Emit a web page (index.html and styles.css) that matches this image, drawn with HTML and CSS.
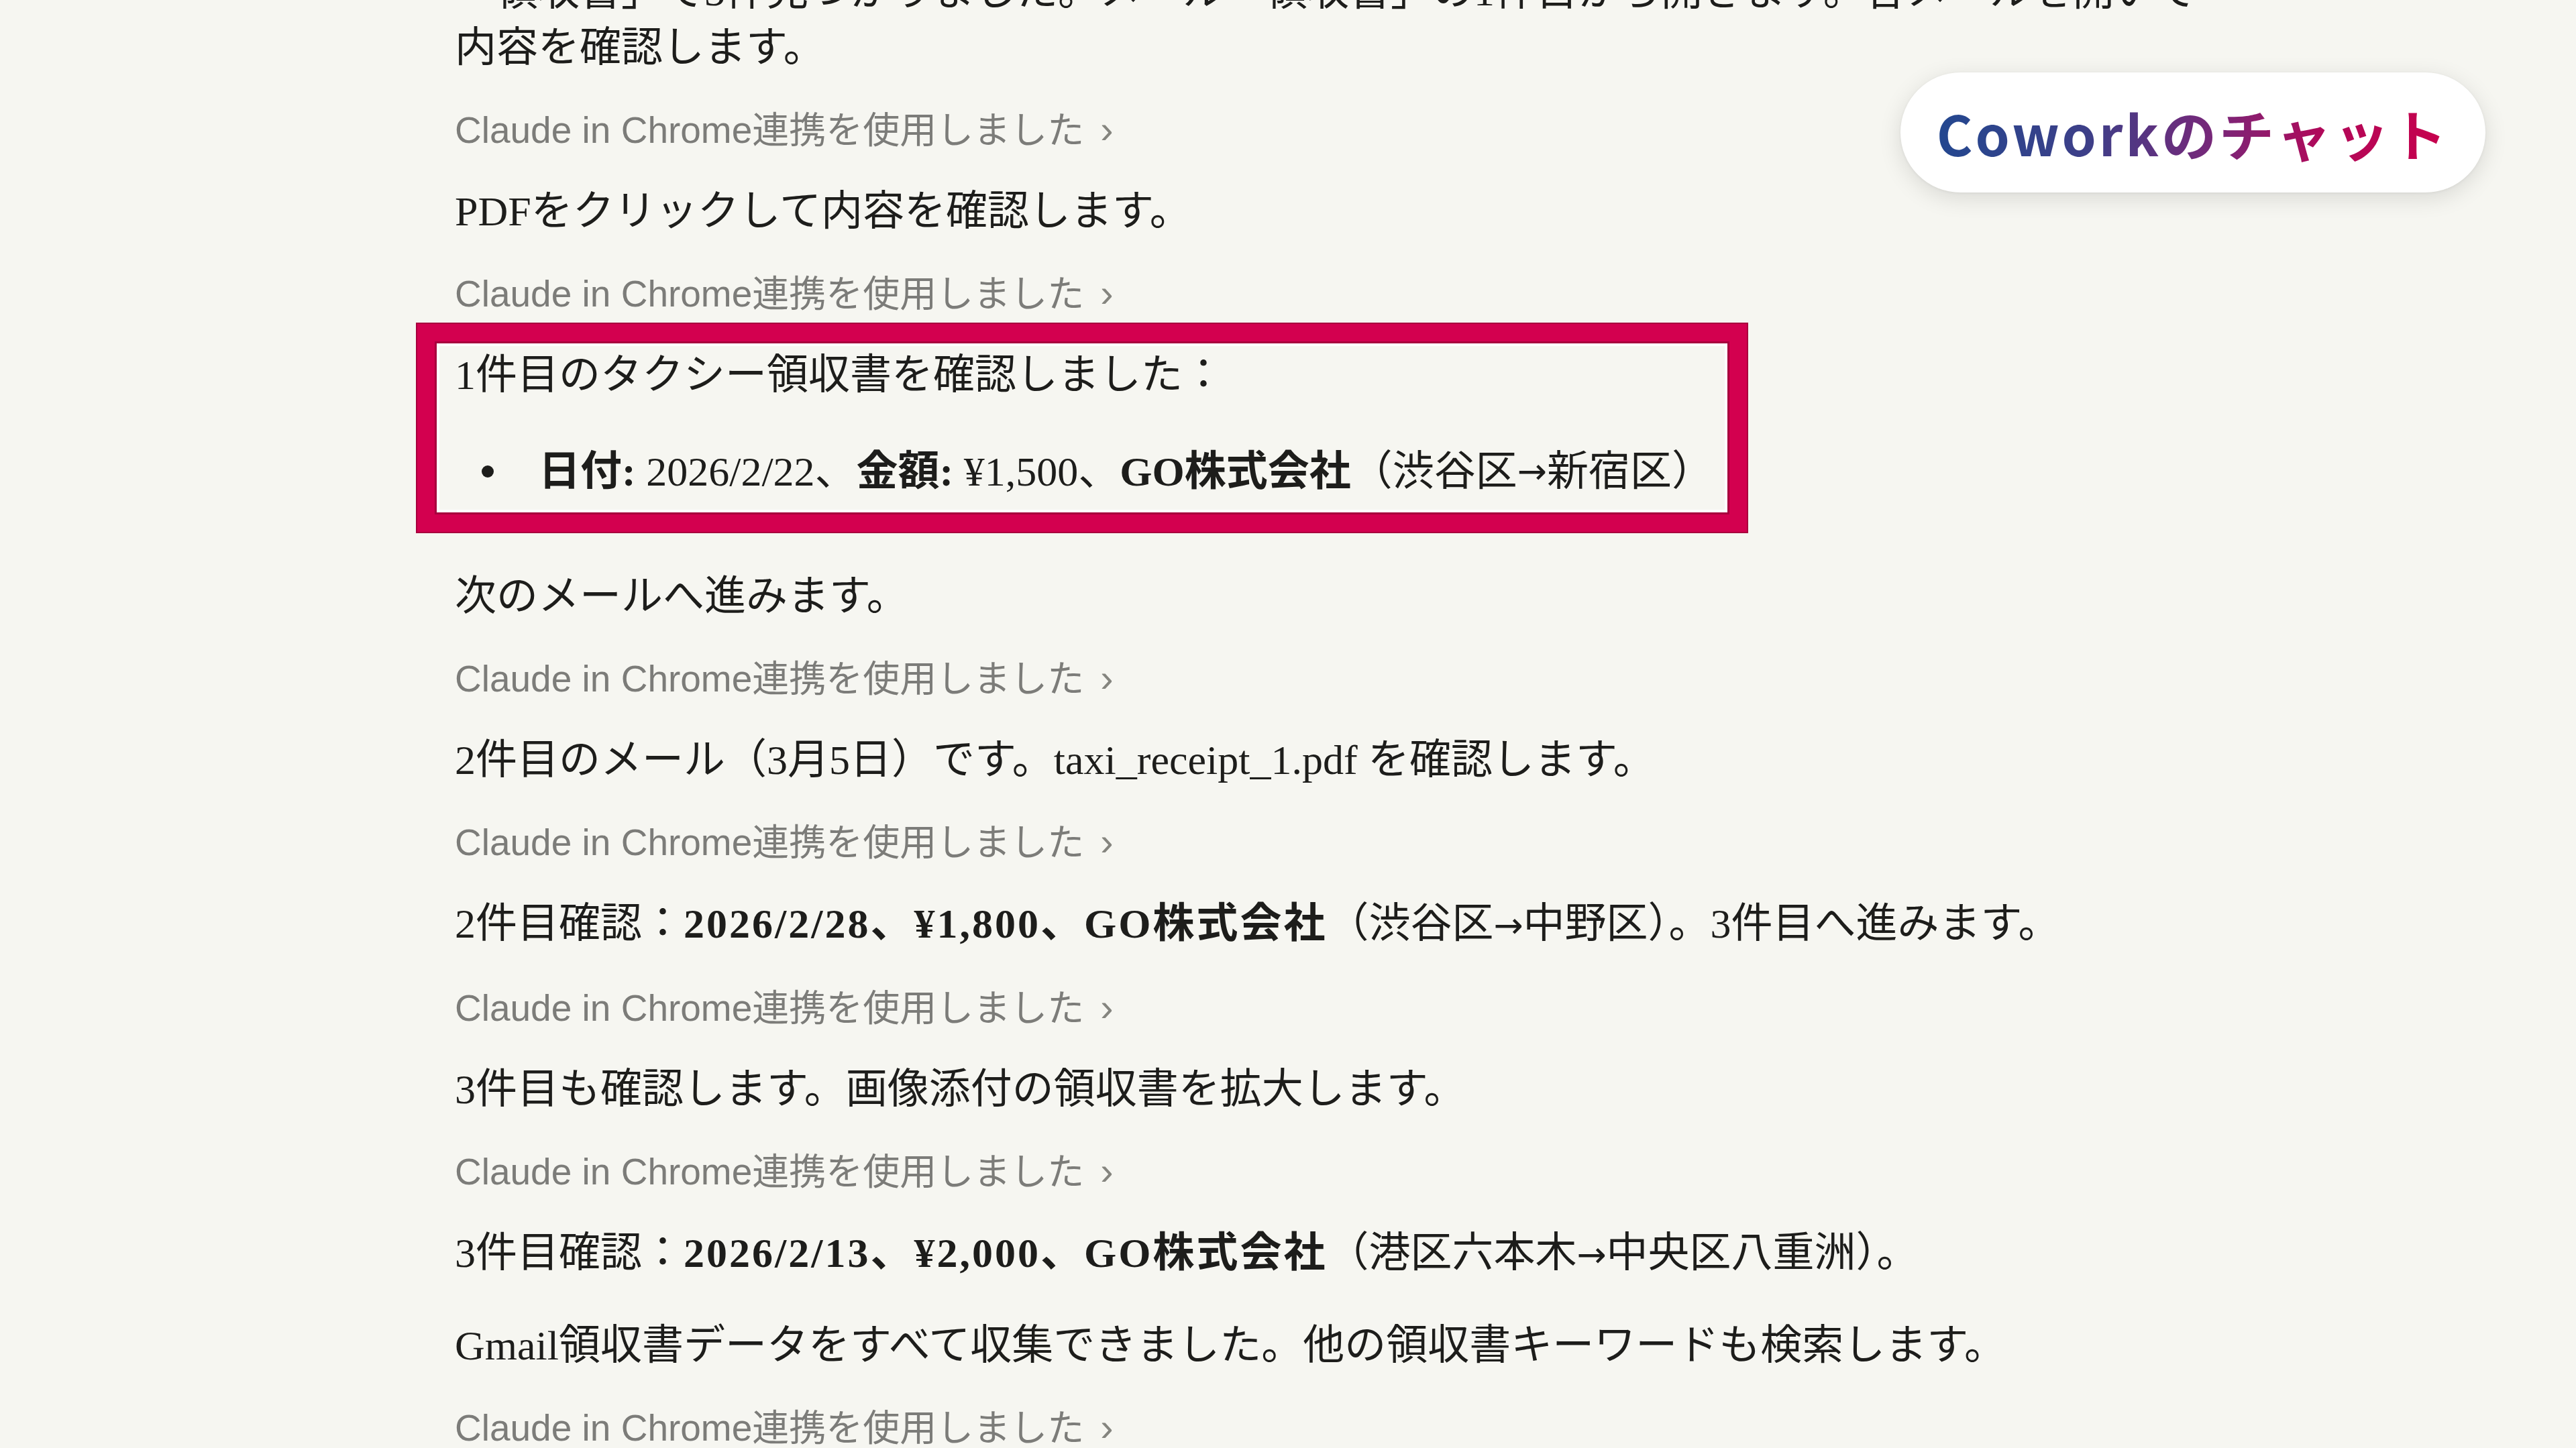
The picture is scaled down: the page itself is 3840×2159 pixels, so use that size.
FILE: index.html
```html
<!DOCTYPE html>
<html lang="ja">
<head>
    <meta charset="UTF-8">
    <meta name="viewport" content="width=device-width, initial-scale=1.0">
    <title>Coworkのチャット</title>
    <link rel="stylesheet" href="styles.css">
</head>
<body>
    <main class="chat">
        <p class="msg first">「領収書」で3件見つかりました。メール「領収書」の1件目から開きます。各メールを開いて<br>内容を確認します。</p>
        <div class="tool">Claude in Chrome連携を使用しました<span class="chev">›</span></div>
        <p class="msg">PDFをクリックして内容を確認します。</p>
        <div class="tool">Claude in Chrome連携を使用しました<span class="chev">›</span></div>

        <div class="highlight">
            <p class="msg">1件目のタクシー領収書を確認しました：</p>
            <ul class="list">
                <li><b>日付:</b>&nbsp;2026/2/22、<b>金額:</b>&nbsp;¥1,500、<b>GO株式会社</b>（渋谷区<span class="arrow">→</span>新宿区）</li>
            </ul>
        </div>

        <p class="msg">次のメールへ進みます。</p>
        <div class="tool">Claude in Chrome連携を使用しました<span class="chev">›</span></div>
        <p class="msg">2件目のメール（3月5日）です。taxi_receipt_1.pdf を確認します。</p>
        <div class="tool">Claude in Chrome連携を使用しました<span class="chev">›</span></div>
        <p class="msg">2件目確認：<b>2026/2/28、¥1,800、GO株式会社</b>（渋谷区<span class="arrow">→</span>中野区）。3件目へ進みます。</p>
        <div class="tool">Claude in Chrome連携を使用しました<span class="chev">›</span></div>
        <p class="msg">3件目も確認します。画像添付の領収書を拡大します。</p>
        <div class="tool">Claude in Chrome連携を使用しました<span class="chev">›</span></div>
        <p class="msg">3件目確認：<b>2026/2/13、¥2,000、GO株式会社</b>（港区六本木<span class="arrow">→</span>中央区八重洲）。</p>
        <p class="msg">Gmail領収書データをすべて収集できました。他の領収書キーワードも検索します。</p>
        <div class="tool">Claude in Chrome連携を使用しました<span class="chev">›</span></div>
    </main>

    <div class="badge"><span class="badge-text">Coworkのチャット</span></div>
</body>
</html>
```

FILE: styles.css
```css
* {
    margin: 0;
    padding: 0;
    box-sizing: border-box;
}

html, body {
    height: 100%;
}

body {
    background: #f6f6f1;
    overflow: hidden;
    color: #1d1d1b;
    font-family: "Liberation Serif", "Noto Sans CJK JP", serif;
}

.chat {
    width: 2700px;
    margin-left: 678px;
}

.msg {
    font-size: 62px;
    line-height: 84px;
    white-space: nowrap;
}

.msg b {
    font-weight: 700;
    letter-spacing: 3px;
}

.msg.first {
    margin-top: -55px;
}

.msg + .msg {
    margin-top: 51px;
}

.arrow {
    font-family: "DejaVu Sans", sans-serif;
    font-size: 0.85em;
}

.tool {
    margin: 41.5px 0;
    font-family: "Liberation Sans", "Noto Sans CJK JP", sans-serif;
    font-size: 55px;
    line-height: 76px;
    color: #7c7c79;
}

.chev {
    display: inline-block;
    margin-left: 24px;
    font-size: 58px;
    color: #85857f;
}

/* magenta annotation frame drawn over the first receipt */
.highlight {
    position: relative;
    width: fit-content;
}

.highlight::before {
    content: '';
    position: absolute;
    top: -34px;
    bottom: -48px;
    left: -56px;
    right: -50px;
    border: 26px solid #d3004f;
    box-shadow:
        inset 0 0 0 3px #a8003e,
        inset 0 0 0 7px rgba(255, 255, 255, 0.9),
        0 0 0 2px #a8003e;
    pointer-events: none;
}

.list {
    list-style: none;
    margin: 60px 0 102px;
    padding-left: 40px;
}

.list li {
    display: flex;
    align-items: center;
    font-size: 62px;
    line-height: 84px;
    white-space: nowrap;
}

.list li::before {
    content: '';
    flex: none;
    width: 18px;
    height: 18px;
    margin-right: 67px;
    border-radius: 50%;
    background: #1d1d1b;
}

.badge {
    position: absolute;
    top: 108px;
    right: 135px;
    width: 872px;
    height: 179px;
    display: flex;
    align-items: center;
    justify-content: center;
    background: #fff;
    border-radius: 90px;
    box-shadow: 0 8px 34px rgba(0, 0, 0, 0.12), 0 1px 4px rgba(0, 0, 0, 0.06);
}

.badge-text {
    font-family: "Noto Sans CJK JP", "Noto Sans", sans-serif;
    font-weight: 700;
    font-size: 82px;
    letter-spacing: 4px;
    background: linear-gradient(90deg, #23478f 0%, #3e3f88 30%, #7a2678 55%, #b0095a 75%, #c8004c 100%);
    -webkit-background-clip: text;
    background-clip: text;
    color: transparent;
}
```
